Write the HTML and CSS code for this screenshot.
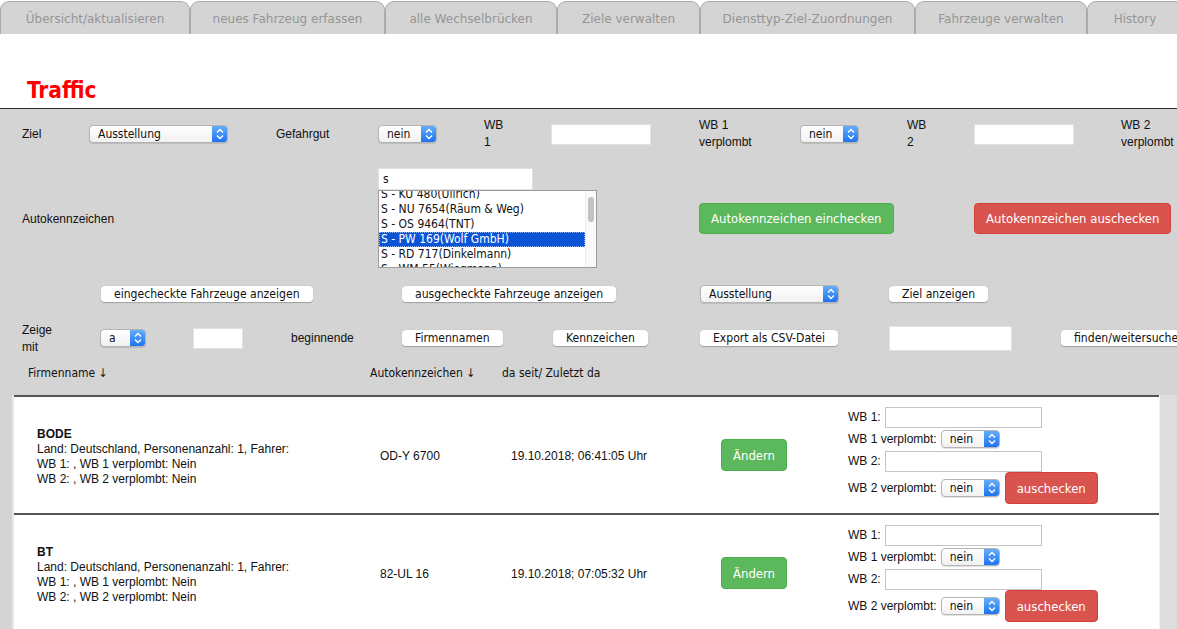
FILE: index.html
```html
<!DOCTYPE html>
<html lang="de">
<head>
<meta charset="utf-8">
<title>Traffic</title>
<link rel="stylesheet" href="styles.css">
</head>
<body>
<nav class="tabs">
  <span class="tab">Übersicht/aktualisieren</span>
  <span class="tab">neues Fahrzeug erfassen</span>
  <span class="tab">alle Wechselbrücken</span>
  <span class="tab">Ziele verwalten</span>
  <span class="tab">Diensttyp-Ziel-Zuordnungen</span>
  <span class="tab">Fahrzeuge verwalten</span>
  <span class="tab">History</span>
</nav>
<header class="brand"><h1 class="brand-title">Traffic</h1></header>

<section class="form-top">
  <span class="lbl">Ziel</span>
  <span class="sel sel-ziel"><span class="sel-val">Ausstellung</span><span class="sel-step"><svg viewBox="0 0 16 18" width="16" height="18"><path d="M5 7.5L8 4.5L11 7.5M5 10.5L8 13.5L11 10.5" fill="none" stroke="#fff" stroke-width="1.4"/></svg></span></span>
  <span class="lbl">Gefahrgut</span>
  <span class="sel sel-nein"><span class="sel-val">nein</span><span class="sel-step"><svg viewBox="0 0 16 18" width="16" height="18"><path d="M5 7.5L8 4.5L11 7.5M5 10.5L8 13.5L11 10.5" fill="none" stroke="#fff" stroke-width="1.4"/></svg></span></span>
  <span class="lbl two">WB<br>1</span>
  <span class="inp inp-wb"></span>
  <span class="lbl two">WB 1<br>verplombt</span>
  <span class="sel sel-nein"><span class="sel-val">nein</span><span class="sel-step"><svg viewBox="0 0 16 18" width="16" height="18"><path d="M5 7.5L8 4.5L11 7.5M5 10.5L8 13.5L11 10.5" fill="none" stroke="#fff" stroke-width="1.4"/></svg></span></span>
  <span class="lbl two">WB<br>2</span>
  <span class="inp inp-wb"></span>
  <span class="lbl two">WB 2<br>verplombt</span>

  <span class="lbl span-label">Autokennzeichen</span>
  <div class="picker">
    <span class="picker-search">s</span>
    <div class="listbox">
      <div class="listbox-items">
        <div class="opt">S - KU 480(Ullrich)</div>
        <div class="opt">S - NU 7654(Räum &amp; Weg)</div>
        <div class="opt">S - OS 9464(TNT)</div>
        <div class="opt opt-sel">S - PW 169(Wolf GmbH)</div>
        <div class="opt">S - RD 717(Dinkelmann)</div>
        <div class="opt">S - WM 55(Wiegmann)</div>
      </div>
      <div class="listbox-bar"><span class="listbox-thumb"></span></div>
    </div>
  </div>
  <span class="btn btn-green btn-big span-green">Autokennzeichen einchecken</span>
  <span class="btn btn-red btn-big span-red">Autokennzeichen auschecken</span>
</section>

<section class="form-mid">
  <span class="wbtn span-ein">eingecheckte Fahrzeuge anzeigen</span>
  <span class="wbtn span-aus">ausgecheckte Fahrzeuge anzeigen</span>
  <span class="sel sel-ziel"><span class="sel-val">Ausstellung</span><span class="sel-step"><svg viewBox="0 0 16 18" width="16" height="18"><path d="M5 7.5L8 4.5L11 7.5M5 10.5L8 13.5L11 10.5" fill="none" stroke="#fff" stroke-width="1.4"/></svg></span></span>
  <span class="wbtn">Ziel anzeigen</span>
  <span class="cell-empty"></span>

  <span class="lbl two">Zeige<br>mit</span>
  <span class="sel sel-a"><span class="sel-val">a</span><span class="sel-step"><svg viewBox="0 0 16 18" width="16" height="18"><path d="M5 7.5L8 4.5L11 7.5M5 10.5L8 13.5L11 10.5" fill="none" stroke="#fff" stroke-width="1.4"/></svg></span></span>
  <span class="inp inp-short"></span>
  <span class="lbl">beginnende</span>
  <span class="wbtn">Firmennamen</span>
  <span class="wbtn">Kennzeichen</span>
  <span class="wbtn">Export als CSV-Datei</span>
  <span class="inp inp-find"></span>
  <span class="wbtn">finden/weitersuchen</span>
</section>

<div class="list-head">
  <span>Firmenname ↓</span>
  <span>Autokennzeichen ↓</span>
  <span>da seit/ Zuletzt da</span>
</div>

<div class="panel">
  <div class="rows">
    <div class="row">
      <div class="info"><b>BODE</b><br>Land: Deutschland, Personenanzahl: 1, Fahrer:<br>WB 1: , WB 1 verplombt: Nein<br>WB 2: , WB 2 verplombt: Nein</div>
      <div class="cell">OD-Y 6700</div>
      <div class="cell">19.10.2018; 06:41:05 Uhr</div>
      <div><span class="btn btn-green btn-row">Ändern</span></div>
      <div class="edit">
        <div class="edit-line"><span class="elbl">WB 1:</span><span class="inp inp-row"></span></div>
        <div class="edit-line"><span class="elbl">WB 1 verplombt:</span><span class="sel sel-nein"><span class="sel-val">nein</span><span class="sel-step"><svg viewBox="0 0 16 18" width="16" height="18"><path d="M5 7.5L8 4.5L11 7.5M5 10.5L8 13.5L11 10.5" fill="none" stroke="#fff" stroke-width="1.4"/></svg></span></span></div>
        <div class="edit-line"><span class="elbl">WB 2:</span><span class="inp inp-row"></span></div>
        <div class="edit-line edit-last"><span class="elbl">WB 2 verplombt:</span><span class="sel sel-nein"><span class="sel-val">nein</span><span class="sel-step"><svg viewBox="0 0 16 18" width="16" height="18"><path d="M5 7.5L8 4.5L11 7.5M5 10.5L8 13.5L11 10.5" fill="none" stroke="#fff" stroke-width="1.4"/></svg></span></span><span class="btn btn-red btn-row btn-out">auschecken</span></div>
      </div>
    </div>
    <div class="row">
      <div class="info"><b>BT</b><br>Land: Deutschland, Personenanzahl: 1, Fahrer:<br>WB 1: , WB 1 verplombt: Nein<br>WB 2: , WB 2 verplombt: Nein</div>
      <div class="cell">82-UL 16</div>
      <div class="cell">19.10.2018; 07:05:32 Uhr</div>
      <div><span class="btn btn-green btn-row">Ändern</span></div>
      <div class="edit">
        <div class="edit-line"><span class="elbl">WB 1:</span><span class="inp inp-row"></span></div>
        <div class="edit-line"><span class="elbl">WB 1 verplombt:</span><span class="sel sel-nein"><span class="sel-val">nein</span><span class="sel-step"><svg viewBox="0 0 16 18" width="16" height="18"><path d="M5 7.5L8 4.5L11 7.5M5 10.5L8 13.5L11 10.5" fill="none" stroke="#fff" stroke-width="1.4"/></svg></span></span></div>
        <div class="edit-line"><span class="elbl">WB 2:</span><span class="inp inp-row"></span></div>
        <div class="edit-line edit-last"><span class="elbl">WB 2 verplombt:</span><span class="sel sel-nein"><span class="sel-val">nein</span><span class="sel-step"><svg viewBox="0 0 16 18" width="16" height="18"><path d="M5 7.5L8 4.5L11 7.5M5 10.5L8 13.5L11 10.5" fill="none" stroke="#fff" stroke-width="1.4"/></svg></span></span><span class="btn btn-red btn-row btn-out">auschecken</span></div>
      </div>
    </div>
  </div>
  <div class="panel-bar"></div>
</div>
</body>
</html>
```

FILE: styles.css
```css
* { box-sizing: border-box; }
html, body { margin: 0; height: 100%; overflow: hidden; }
body {
  background: #d4d4d4;
  font-family: "Liberation Sans", Arial, sans-serif;
  font-size: 12px;
  color: #111;
  width: 1177px;
}

/* tabs */
.tabs {
  display: flex;
  height: 34px;
  padding-top: 1px;
  overflow: hidden;
  background: #fff;
}
.tab {
  flex: 0 0 auto;
  height: 33px;
  line-height: 35px;
  text-align: center;
  background: #d4d4d4;
  border: 1px solid #ababab;
  border-bottom: none;
  border-radius: 9px 9px 0 0;
  color: #959595;
  font-family: "DejaVu Sans", sans-serif;
  font-size: 12px;
  white-space: nowrap;
}
.tab:nth-child(1) { width: 190px; }
.tab:nth-child(2) { width: 195px; }
.tab:nth-child(3) { width: 172px; }
.tab:nth-child(4) { width: 143px; }
.tab:nth-child(5) { width: 215px; }
.tab:nth-child(6) { width: 172px; }
.tab:nth-child(7) { width: 96px; }

.brand {
  background: #fff;
  height: 75px;
  border-bottom: 1px solid #2b2b2b;
}
.brand-title {
  margin: 0;
  padding: 43px 0 0 27px;
  line-height: 26px;
  font-family: "DejaVu Sans Condensed", "DejaVu Sans", sans-serif;
  font-weight: bold;
  font-size: 22.5px;
  color: #ff0000;
}

/* shared controls */
.lbl { white-space: nowrap; }
.two { line-height: 17px; }
.sel {
  display: inline-flex;
  height: 18px;
  border: 1px solid #b4b4b4;
  border-radius: 4px;
  background: linear-gradient(#ffffff, #f1f1f1);
  box-shadow: 0 1px 1px rgba(0,0,0,0.12);
  overflow: hidden;
  font-family: "DejaVu Sans Condensed", "DejaVu Sans", sans-serif;
  font-size: 12px;
  color: #111;
  justify-self: start;
}
.sel-val { flex: 1; padding-left: 8px; line-height: 16px; }
.sel-step {
  width: 16px;
  background: linear-gradient(#69b1fb, #1a6ff0);
  display: flex;
  align-items: center;
  justify-content: center;
  margin: -1px -1px -1px 0;
}
.sel-step svg { display: block; }
.sel-ziel { width: 139px; }
.sel-nein { width: 59px; }
.sel-a { width: 46px; }
.inp {
  display: block;
  background: #fff;
  border: 1px solid #e2e2e2;
  justify-self: start;
}
.inp-wb { width: 100px; height: 21px; }
.inp-short { width: 50px; height: 21px; }
.inp-find { width: 123px; height: 25px; }
.inp-row { width: 157px; height: 21px; border-color: #c4c4c4; }

.btn {
  display: inline-flex;
  align-items: center;
  justify-content: center;
  color: #fff;
  border-radius: 4px;
  font-family: "DejaVu Sans Condensed", "DejaVu Sans", sans-serif;
  font-size: 13px;
  white-space: nowrap;
  justify-self: start;
}
.btn-green { background: #5cb85c; border: 1px solid #4cae4c; }
.btn-red { background: #d9534f; border: 1px solid #d43f3a; }
.btn-big { height: 31px; padding: 0 11px; }
.btn-row { height: 32px; padding: 0 11px; }

.wbtn {
  display: inline-flex;
  align-items: center;
  height: 16px;
  padding: 0 13px;
  background: #fff;
  border-radius: 4px;
  box-shadow: 0 0.5px 1px rgba(0,0,0,0.25);
  font-family: "DejaVu Sans Condensed", "DejaVu Sans", sans-serif;
  font-size: 12.1px;
  color: #111;
  white-space: nowrap;
  justify-self: start;
}

/* top form grid */
.form-top {
  display: grid;
  grid-template-columns: 67px 187px 102px 106px 67px 148px 101px 107px 67px 147px 1fr;
  grid-template-rows: 34px 100px;
  row-gap: 17px;
  align-items: center;
  padding: 8px 0 0 22px;
}
.span-label { grid-column: 1 / 4; padding-top: 1px; }
.picker { grid-column: 4 / 7; align-self: stretch; display: flex; flex-direction: column; }
.span-green { grid-column: 7 / 10; }
.span-red { grid-column: 10 / 12; }

.picker-search {
  width: 155px;
  height: 22px;
  background: #fff;
  border: 1px solid #e0e0e0;
  padding-left: 4px;
  line-height: 21px;
  font-family: "DejaVu Sans Condensed", "DejaVu Sans", sans-serif;
  font-size: 12px;
}
.listbox {
  width: 219px;
  height: 78px;
  border: 1px solid #9c9c9c;
  background: #fff;
  display: flex;
  overflow: hidden;
}
.listbox-items {
  flex: 1;
  margin-top: -4px;
  font-family: "DejaVu Sans Condensed", "DejaVu Sans", sans-serif;
  font-size: 12px;
}
.opt { height: 15px; line-height: 15px; padding-left: 2px; white-space: nowrap; }
.opt-sel { background: #0b54d6; color: #fff; outline: 1px dotted #8fb4f3; outline-offset: -1px; }
.listbox-bar {
  width: 11px;
  border-left: 1px solid #ececec;
  background: #fafafa;
  padding: 6px 2px 0 2px;
}
.listbox-thumb {
  display: block;
  height: 25px;
  border-radius: 3px;
  background: #c2c2c2;
}

/* middle form grid */
.form-mid {
  display: grid;
  grid-template-columns: 78px 93px 98px 111px 151px 147px 189px 172px 1fr;
  grid-template-rows: 24px 28px;
  row-gap: 18px;
  align-items: center;
  margin-top: 14px;
  padding-left: 22px;
}
.span-ein { grid-column: 2 / 5; margin-left: 1px; }
.span-aus { grid-column: 5 / 7; }
.form-mid .two { padding-top: 2px; }

/* list header */
.list-head {
  display: grid;
  grid-template-columns: 342px 132px 1fr;
  height: 20px;
  margin-top: 11px;
  padding-left: 28px;
  align-items: center;
  font-family: "DejaVu Sans Condensed", "DejaVu Sans", sans-serif;
  font-size: 12px;
}

/* panel */
.panel {
  display: flex;
  margin-top: 12px;
  margin-left: 12px;
  border-left: 2px solid #e6e6e6;
  height: 240px;
}
.rows { width: 1145px; background: #fff; }
.panel-bar {
  flex: 1;
  background: #dedede;
  border-left: 1px solid #f3f3f3;
}
.row {
  display: grid;
  grid-template-columns: 343px 131px 210px 127px 1fr;
  align-items: center;
  height: 118px;
  border-top: 2px solid #555;
  padding-left: 23px;
}
.info { line-height: 15px; padding-top: 4px; }
.cell { padding-top: 2px; }
.edit { display: flex; flex-direction: column; }
.edit-line { display: flex; align-items: center; height: 22px; }
.edit-last { height: 32px; }
.elbl { margin-right: 4px; white-space: nowrap; }
.btn-out { margin-left: 5px; }
```
